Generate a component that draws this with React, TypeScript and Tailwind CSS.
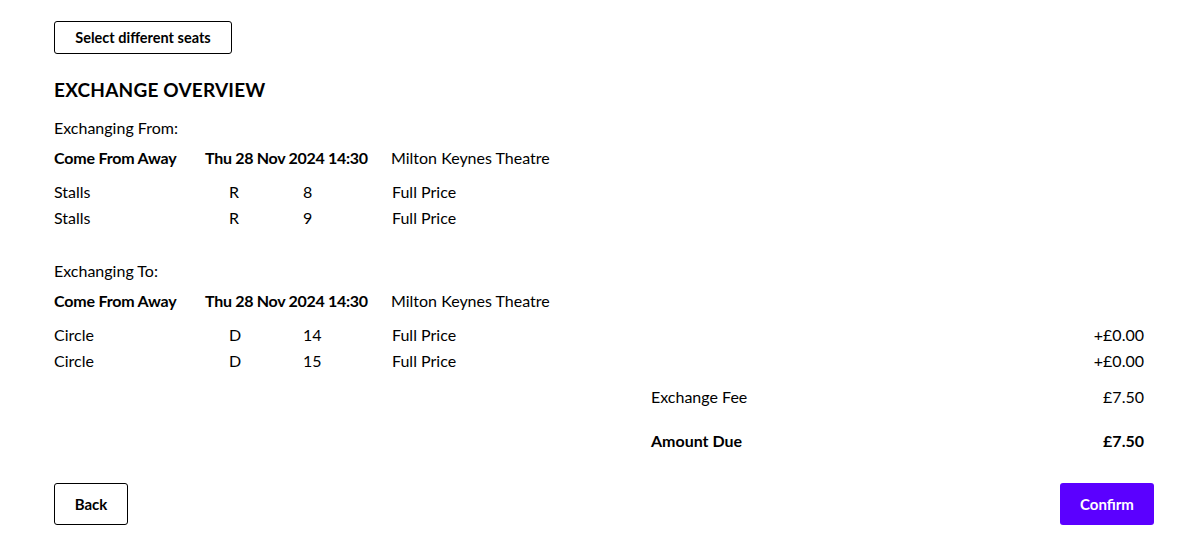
import React from "react";

type Seat = { area: string; row: string; seat: string; price: string; amount?: string };

const fromSeats: Seat[] = [
  { area: "Stalls", row: "R", seat: "8", price: "Full Price" },
  { area: "Stalls", row: "R", seat: "9", price: "Full Price" },
];

const toSeats: Seat[] = [
  { area: "Circle", row: "D", seat: "14", price: "Full Price", amount: "+£0.00" },
  { area: "Circle", row: "D", seat: "15", price: "Full Price", amount: "+£0.00" },
];

function ShowLine() {
  return (
    <div className="flex items-center h-[30px] mt-[4px]">
      <span className="w-[151px] font-bold tracking-[-0.2px]">Come From Away</span>
      <span className="w-[186px] font-bold tracking-[-0.3px]">Thu 28 Nov 2024 14:30</span>
      <span>Milton Keynes Theatre</span>
    </div>
  );
}

function SeatRows({ seats }: { seats: Seat[] }) {
  return (
    <div className="mt-[6px]">
      {seats.map((s, i) => (
        <div key={i} className="flex items-center h-[26px] pr-[10px]">
          <span className="w-[175px]">{s.area}</span>
          <span className="w-[74px]">{s.row}</span>
          <span className="w-[89px]">{s.seat}</span>
          <span className="flex-1">{s.price}</span>
          {s.amount && <span>{s.amount}</span>}
        </div>
      ))}
    </div>
  );
}

export default function App() {
  return (
    <div className="bg-white text-black text-[16px] px-[54px] pt-[21px] min-h-[557px]" style={{ fontFamily: "Lato, 'Noto Sans', sans-serif" }}>
      <div className="w-[1100px]">
        <button className="h-[33px] w-[178px] border border-black rounded-[3px] text-[14.5px] font-bold">
          Select different seats
        </button>

        <h1 className="mt-[22px] text-[19px] font-bold leading-[28px] tracking-[0.2px]">EXCHANGE OVERVIEW</h1>

        <p className="mt-[13px] leading-[22px]">Exchanging From:</p>
        <ShowLine />
        <SeatRows seats={fromSeats} />

        <p className="mt-[29px] leading-[22px]">Exchanging To:</p>
        <ShowLine />
        <SeatRows seats={toSeats} />

        <div className="flex items-center h-[26px] mt-[10px] pl-[597px] pr-[10px]">
          <span className="flex-1">Exchange Fee</span>
          <span>£7.50</span>
        </div>
        <div className="flex items-center h-[26px] mt-[18px] pl-[597px] pr-[10px] font-bold">
          <span className="flex-1">Amount Due</span>
          <span>£7.50</span>
        </div>

        <div className="flex justify-between mt-[29px]">
          <button className="h-[42px] w-[74px] border border-black rounded-[3px] text-[15px] font-bold">Back</button>
          <button className="h-[42px] w-[94px] rounded-[3px] bg-[#5b00ff] text-white text-[15px] font-bold">Confirm</button>
        </div>
      </div>
    </div>
  );
}
